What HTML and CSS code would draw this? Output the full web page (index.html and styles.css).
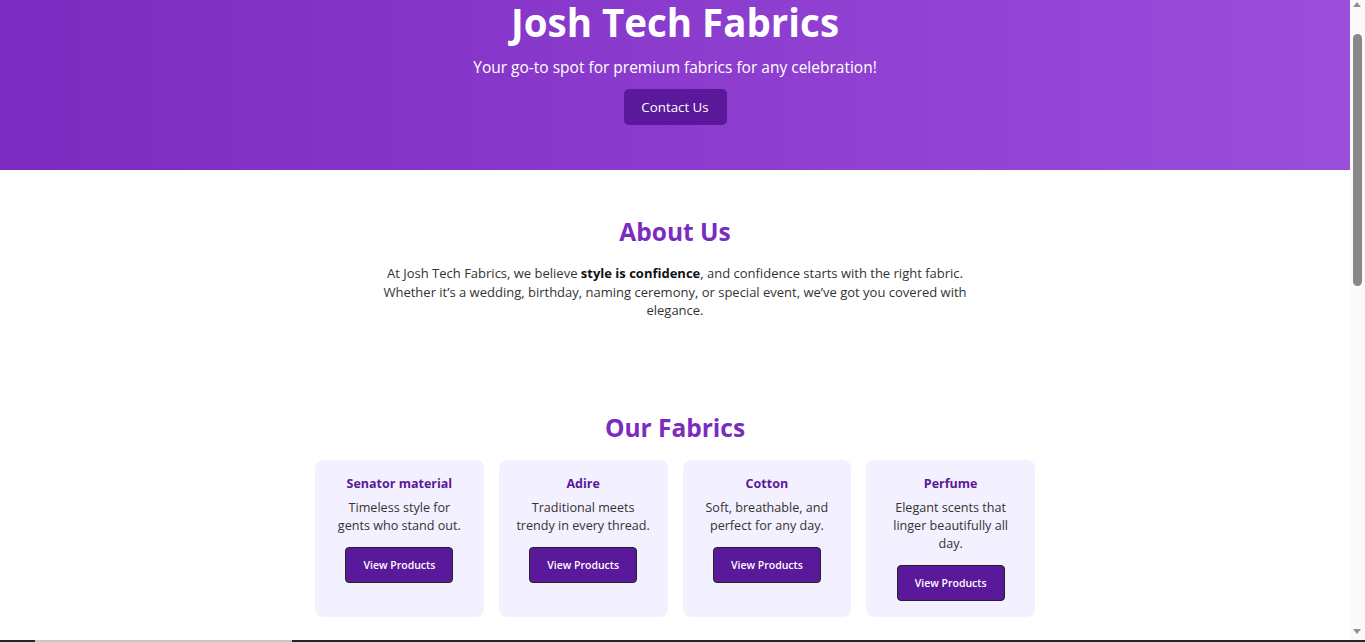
FILE: index.html
```html
<!DOCTYPE html>
<html lang="en">
<head>
<meta charset="utf-8">
<title>Josh Tech Fabrics</title>
<link rel="stylesheet" href="styles.css">
</head>
<body>
<header class="hero">
  <h1 class="hero-title">Josh Tech Fabrics</h1>
  <p class="hero-sub">Your go-to spot for premium fabrics for any celebration!</p>
  <a class="btn-contact" href="#contact">Contact Us</a>
</header>

<section class="about">
  <h2 class="section-title">About Us</h2>
  <p class="about-text">At Josh Tech Fabrics, we believe <strong>style is confidence</strong>, and confidence starts with the right fabric. Whether it’s a wedding, birthday, naming ceremony, or special event, we’ve got you covered with elegance.</p>
</section>

<section class="fabrics">
  <h2 class="section-title">Our Fabrics</h2>
  <div class="cards">
    <div class="card">
      <h3 class="card-title">Senator material</h3>
      <p class="card-text">Timeless style for gents who stand out.</p>
      <a class="btn-view" href="#">View Products</a>
    </div>
    <div class="card">
      <h3 class="card-title">Adire</h3>
      <p class="card-text">Traditional meets trendy in every thread.</p>
      <a class="btn-view" href="#">View Products</a>
    </div>
    <div class="card">
      <h3 class="card-title">Cotton</h3>
      <p class="card-text">Soft, breathable, and perfect for any day.</p>
      <a class="btn-view" href="#">View Products</a>
    </div>
    <div class="card">
      <h3 class="card-title">Perfume</h3>
      <p class="card-text">Elegant scents that linger beautifully all day.</p>
      <a class="btn-view" href="#">View Products</a>
    </div>
  </div>
</section>

<section class="contact" id="contact">
  <h2 class="section-title">Contact Us</h2>
  <p class="about-text">Reach out to us for orders and enquiries.</p>
</section>

<div class="scrollbar" aria-hidden="true">
  <span class="sb-arrow sb-up"></span>
  <span class="sb-thumb"></span>
  <span class="sb-arrow sb-down"></span>
</div>
<div class="bottom-bar"><span class="bar-seg"></span></div>
</body>
</html>
```

FILE: styles.css
```css
* { box-sizing: border-box; }
html { overflow: hidden; }
html, body { margin: 0; padding: 0; }
body {
  font-family: "Open Sans", "DejaVu Sans", sans-serif;
  color: #333;
  background: #fff;
  margin-right: 15px;
}
.hero {
  background: linear-gradient(90deg, #7b2bbf 0%, #9b4ddc 100%);
  color: #fff;
  text-align: center;
  padding: 0 0 45px;
  display: flex;
  flex-direction: column;
  align-items: center;
}
.hero-title {
  margin: 0;
  font-size: 38.5px;
  line-height: 44px;
  font-weight: 700;
}
.hero-sub {
  margin: 11px 0 10px;
  font-size: 15.5px;
  line-height: 24px;
}
.btn-contact {
  display: inline-flex;
  align-items: center;
  justify-content: center;
  width: 103px;
  height: 36px;
  background: #5a189a;
  color: #fff;
  font-size: 13.3px;
  text-decoration: none;
  border-radius: 5px;
}
.about {
  padding: 47px 0 0;
  text-align: center;
}
.section-title {
  margin: 0;
  font-size: 24.5px;
  line-height: 30px;
  font-weight: 700;
  color: #7b2cbf;
}
.about-text {
  margin: 17px auto 0;
  max-width: 600px;
  font-size: 13px;
  line-height: 18.5px;
  color: #333;
}
.about-text strong { color: #111; }
.fabrics {
  padding: 93px 0 0;
  text-align: center;
}
.cards {
  margin: 17px auto 0;
  width: 720px;
  display: grid;
  grid-template-columns: repeat(4, 1fr);
  gap: 15px;
}
.card {
  background: #f3f0ff;
  border-radius: 8px;
  padding: 15px 16px;
  display: flex;
  flex-direction: column;
  align-items: center;
  min-height: 157px;
}
.card-title {
  margin: 0;
  font-size: 12.5px;
  line-height: 17px;
  font-weight: 700;
  color: #5a189a;
}
.card-text {
  margin: 7px 0 12px;
  font-size: 12.6px;
  line-height: 18px;
  color: #333;
}
.btn-view {
  display: inline-flex;
  align-items: center;
  justify-content: center;
  width: 108px;
  height: 36px;
  background: #5a189a;
  color: #fff;
  font-size: 10.5px;
  font-weight: 600;
  text-decoration: none;
  border: 1px solid #222;
  border-radius: 4px;
}
.contact {
  padding: 120px 0 700px;
  text-align: center;
}
.scrollbar {
  position: fixed;
  top: 0;
  right: 0;
  width: 15px;
  height: 100vh;
  background: #fafafa;
}
.sb-thumb {
  position: absolute;
  left: 3px;
  top: 34px;
  width: 9px;
  height: 252px;
  border-radius: 5px;
  background: #888;
}
.sb-arrow {
  position: absolute;
  left: 3px;
  width: 0;
  height: 0;
  border-left: 4.5px solid transparent;
  border-right: 4.5px solid transparent;
}
.sb-up {
  top: 2px;
  border-bottom: 5px solid #909090;
}
.sb-down {
  bottom: 8px;
  border-top: 5px solid #909090;
}
.bottom-bar {
  position: fixed;
  left: 0;
  right: 0;
  bottom: 0;
  height: 2px;
  background: #23272b;
}
.bar-seg {
  display: block;
  margin-left: 35px;
  width: 257px;
  height: 2px;
  background: #c8c8c8;
}
```
